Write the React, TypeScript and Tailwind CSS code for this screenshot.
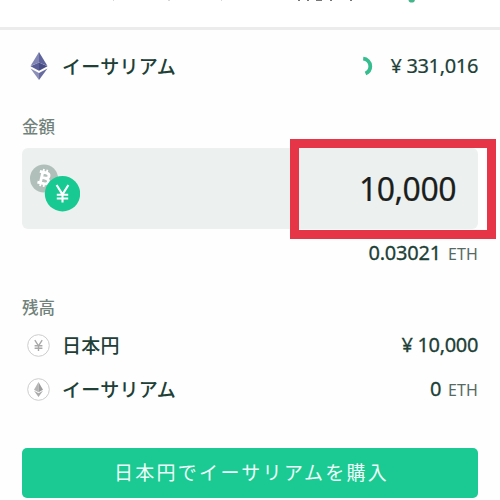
import type { ReactNode } from "react";

const purchase = {
  currency: "イーサリアム",
  price: "331,016",
  amount: "10,000",
  converted: "0.03021",
};

function EthMark({ className }: { className: string }) {
  return (
    <svg viewBox="0 0 18 28" className={className}>
      <path d="M9 0 L0.5 14 L9 10.5Z" fill="#8085b3" />
      <path d="M9 0 L17.5 14 L9 10.5Z" fill="#5f639c" />
      <path d="M9 10.5 L0.5 14.2 L9 18.8Z" fill="#595d98" />
      <path d="M9 10.5 L17.5 14.2 L9 18.8Z" fill="#484c85" />
      <path d="M0.5 16.5 L9 21 L9 28Z" fill="#8b8fb8" />
      <path d="M17.5 16.5 L9 21 L9 28Z" fill="#676b9f" />
    </svg>
  );
}

function Spinner() {
  return (
    <svg viewBox="0 0 12 20" className="h-5 w-3">
      <path
        d="M2.2 2.7 C6 3 9.3 6 9.3 10.2 C9.3 13.6 7.3 16.2 4.5 17.4"
        fill="none"
        stroke="#35bd90"
        strokeWidth="3.8"
      />
    </svg>
  );
}

function CurrencyPair() {
  return (
    <svg viewBox="0 0 50 50" className="h-[50px] w-[50px]">
      <circle cx="14" cy="14.5" r="14" fill="#b0bfba" />
      <g
        transform="rotate(13 14 14)"
        fill="none"
        stroke="#fff"
        strokeWidth="2.8"
      >
        <path d="M8.5 8.5 H15 C19.6 8.5 19.6 13.8 15 13.8 H11.5 M15 13.8 C20.5 13.8 20.5 19.5 15 19.5 H8.5 M11.5 8.5 V19.5" />
        <path d="M12 5.2 V8.5 M15.5 5.2 V8.5 M12 19.5 V22.8 M15.5 19.5 V22.8" strokeWidth="1.8" />
      </g>
      <circle cx="32.5" cy="29.7" r="17.7" fill="#18ca92" />
      <path
        d="M26.6 21 L32.5 30.4 L38.4 21 M32.5 30.4 V38.5 M26.8 30.7 H38.2 M26.8 34.5 H38.2"
        fill="none"
        stroke="#fff"
        strokeWidth="2.1"
      />
    </svg>
  );
}

function YenBadge() {
  return (
    <svg viewBox="0 0 23 23" className="h-[23px] w-[23px]">
      <circle cx="11.5" cy="11.5" r="10.8" fill="#fff" stroke="#cdcdcd" />
      <path
        d="M7.8 6.2 L11.5 11.8 L15.2 6.2 M11.5 11.8 V17 M7.6 11.8 H15.4 M7.6 14.2 H15.4"
        fill="none"
        stroke="#a8a8a8"
        strokeWidth="1.4"
      />
    </svg>
  );
}

function EthBadge() {
  return (
    <svg viewBox="0 0 23 23" className="h-[23px] w-[23px]">
      <circle cx="11.5" cy="11.5" r="10.8" fill="#fff" stroke="#cdcdcd" />
      <path d="M11.5 4 L7 11.7 L11.5 14.2Z" fill="#b5b5b5" />
      <path d="M11.5 4 L16 11.7 L11.5 14.2Z" fill="#9d9d9d" />
      <path d="M7 12.8 L11.5 15.3 L16 12.8 L11.5 19Z" fill="#ababab" />
    </svg>
  );
}

function EthUnit() {
  return (
    <span className="ml-[7px] text-base tracking-[0.1px] text-[#566a64] [-webkit-text-stroke:0px]">
      ETH
    </span>
  );
}

function BalanceRow({
  icon,
  name,
  children,
}: {
  icon: ReactNode;
  name: string;
  children: ReactNode;
}) {
  return (
    <div className="flex h-11 items-center pl-[5px]">
      {icon}
      <span className="ml-3 pt-0.5 text-[19px] font-medium tracking-[0.3px]">
        {name}
      </span>
      <span className="ml-auto flex items-baseline text-xl tracking-[-0.35px] [-webkit-text-stroke:0.3px]">
        {children}
      </span>
    </div>
  );
}

export default function App() {
  return (
    <div className="h-[500px] w-[500px] overflow-hidden bg-[#fefefe] font-['Noto_Sans','Noto_Sans_CJK_JP',sans-serif] text-[#203f37]">
      {/* Bottom edge of the scrolled header */}
      <header className="h-[30px] border-b-[3px] border-[#ececec] bg-white">
        <svg viewBox="0 0 500 27" className="h-[27px] w-[500px]">
          <path d="M113 0h1M168 0h2M221 0h1" stroke="#ccc" strokeWidth="1.6" />
          <path
            d="M298 0h2M307 0h2M316 0h6M330 0h2M350 0h2"
            stroke="#777"
            strokeWidth="1.8"
          />
          <circle cx="411.7" cy="-0.6" r="3.2" fill="#45b58c" />
        </svg>
      </header>

      <main className="flex flex-col px-[22px]">
        <div className="mt-[14px] flex h-11 items-center pl-2">
          <EthMark className="h-7 w-[18px]" />
          <span className="ml-[14px] pt-0.5 text-[19px] font-medium tracking-[0.3px]">
            {purchase.currency}
          </span>
          <div className="ml-auto flex items-center gap-[17px]">
            <Spinner />
            <span className="text-xl tracking-[-0.35px] [-webkit-text-stroke:0.2px]">
              ¥ {purchase.price}
            </span>
          </div>
        </div>

        <h2 className="mt-[27px] h-6 text-[16.5px] leading-6 font-medium text-[#71827b]">
          金額
        </h2>

        <div className="relative mt-[9px] flex h-[81px] items-center rounded-md bg-[#ecf0ef] pr-[22px] pl-2">
          <CurrencyPair />
          <span className="ml-auto text-[32px] tracking-[-0.5px] text-[#1b1e1d] [-webkit-text-stroke:0.2px]">
            {purchase.amount}
          </span>
          <div className="absolute -top-[9px] -right-[18px] h-[100px] w-[206px] border-[9px] border-[#e73548]" />
        </div>

        <div className="mt-[10px] flex h-7 items-baseline justify-end text-xl tracking-[-0.2px] [-webkit-text-stroke:0.3px]">
          {purchase.converted}
          <EthUnit />
        </div>

        <h2 className="mt-[29px] h-6 text-[16.5px] leading-6 font-medium text-[#71827b]">
          残高
        </h2>

        <div className="mt-[3px]">
          <BalanceRow icon={<YenBadge />} name="日本円">
            ¥ 10,000
          </BalanceRow>
          <BalanceRow icon={<EthBadge />} name={purchase.currency}>
            0
            <EthUnit />
          </BalanceRow>
        </div>

        <button className="mt-[37px] h-[50px] rounded-[5px] bg-[#1bca93] pt-px pl-[3px] text-[19px] tracking-[2.3px] text-[#effff9]">
          日本円でイーサリアムを購入
        </button>
      </main>
    </div>
  );
}
